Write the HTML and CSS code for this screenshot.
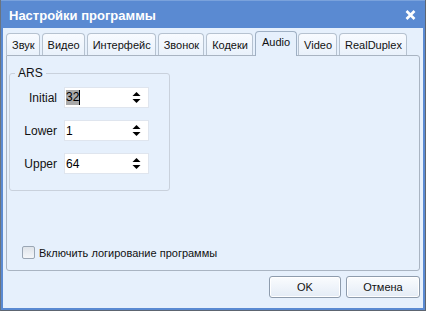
FILE: index.html
```html
<!DOCTYPE html>
<html lang="ru">
<head>
    <meta charset="UTF-8">
    <title>Настройки программы</title>
    <link rel="stylesheet" href="styles.css">
</head>
<body>
    <div class="window">
        <div class="titlebar">
            <span class="title">Настройки программы</span>
            <svg class="close" width="11" height="10" viewBox="0 0 11 10">
                <path d="M1.5 1 L9.5 9 M9.5 1 L1.5 9" stroke="#fff" stroke-width="2.6"/>
            </svg>
        </div>

        <div class="content">
            <div class="tabs">
                <div class="tab">Звук</div>
                <div class="tab">Видео</div>
                <div class="tab">Интерфейс</div>
                <div class="tab">Звонок</div>
                <div class="tab">Кодеки</div>
                <div class="tab active">Audio</div>
                <div class="tab">Video</div>
                <div class="tab">RealDuplex</div>
            </div>

            <div class="panel">
                <fieldset class="group">
                    <legend>ARS</legend>
                    <div class="row">
                        <label>Initial</label>
                        <div class="spin"><span class="value"><span class="sel">32</span><span class="caret"></span></span>
                            <svg width="9" height="13" viewBox="0 0 9 13"><path d="M0.5 5 L4.5 1 L8.5 5 Z M0.5 8 L8.5 8 L4.5 12 Z" fill="#000"/></svg>
                        </div>
                    </div>
                    <div class="row">
                        <label>Lower</label>
                        <div class="spin"><span class="value">1</span>
                            <svg width="9" height="13" viewBox="0 0 9 13"><path d="M0.5 5 L4.5 1 L8.5 5 Z M0.5 8 L8.5 8 L4.5 12 Z" fill="#000"/></svg>
                        </div>
                    </div>
                    <div class="row">
                        <label>Upper</label>
                        <div class="spin"><span class="value">64</span>
                            <svg width="9" height="13" viewBox="0 0 9 13"><path d="M0.5 5 L4.5 1 L8.5 5 Z M0.5 8 L8.5 8 L4.5 12 Z" fill="#000"/></svg>
                        </div>
                    </div>
                </fieldset>

                <div class="check">
                    <span class="box"></span>
                    <span>Включить логирование программы</span>
                </div>
            </div>

            <div class="buttons">
                <button class="btn ok">OK</button>
                <button class="btn">Отмена</button>
            </div>
        </div>
    </div>
</body>
</html>
```

FILE: styles.css
```css
* {
    margin: 0;
    padding: 0;
    box-sizing: border-box;
}
body {
    font-family: 'Liberation Sans', Arial, sans-serif;
    font-size: 11px;
    color: #000;
    background: #fff;
}
.window {
    width: 426px;
    height: 311px;
    display: flex;
    flex-direction: column;
    background: #5a8ad2;
    border: 1px solid #5d6570;
    border-top: none;
    border-left-color: #6a7480;
    padding: 0 2px 2px 1px;
}
.titlebar {
    height: 28px;
    margin: 0 -2px 0 -1px;
    padding: 0 9px 0 8px;
    display: flex;
    align-items: center;
    justify-content: space-between;
    background: #5a8ad2;
    border-top: 1px solid #7aa2dc;
}
.title {
    color: #fff;
    font-weight: bold;
    font-size: 13px;
    padding-top: 1px;
}
.close {
    display: block;
    margin-top: 1px;
}
.content {
    flex: 1;
    background: #e6f0fc;
    display: flex;
    flex-direction: column;
    padding: 3px 3px 9px 2px;
    border-left: 1px solid #5a8ad2;
}
.tabs {
    display: flex;
    align-items: flex-end;
    height: 24px;
    padding-left: 1px;
    position: relative;
    z-index: 1;
}
.tab {
    height: 22px;
    padding: 5px 4px 0 5px;
    margin-right: 2px;
    border: 1px solid #b6c2d0;
    border-bottom: none;
    border-radius: 4px 4px 0 0;
    background: linear-gradient(#f8fbff, #e9f1fb);
    white-space: nowrap;
    color: #111;
}
.tab.active {
    height: 25px;
    margin: 0 1px -1px 0;
    padding: 4px 6px 0;
    background: #e6f0fc;
    border-color: #9fb0c4;
}
.panel {
    flex: 1;
    border: 1px solid #a9b4c2;
    border-radius: 0 3px 3px 3px;
    padding: 11px 2px 0;
    margin-left: 1px;
    display: flex;
    flex-direction: column;
}
.group {
    width: 161px;
    height: 124px;
    border: 1px solid #c9d1dc;
    border-radius: 3px;
    padding: 8px 0 0;
}
.group legend {
    margin-left: 5px;
    padding: 0 3px;
    font-size: 12px;
    line-height: 12px;
    color: #111;
}
.row {
    display: flex;
    align-items: center;
    margin-bottom: 12px;
}
.row label {
    width: 54px;
    text-align: right;
    padding-right: 7px;
    font-size: 12px;
    color: #111;
}
.spin {
    width: 85px;
    height: 21px;
    background: #fff;
    border: 1px solid #dfe5ee;
    display: flex;
    align-items: center;
    justify-content: space-between;
    padding: 0 7px 0 1px;
    font-size: 12px;
}
.value {
    display: flex;
    align-items: center;
}
.sel {
    background: #a9a9a9;
    line-height: 15px;
}
.caret {
    width: 1px;
    height: 15px;
    background: #000;
}
.check {
    margin-top: auto;
    margin-bottom: 11px;
    padding-left: 13px;
    display: flex;
    align-items: center;
    gap: 4px;
    font-size: 11px;
    color: #111;
}
.box {
    width: 13px;
    height: 13px;
    border: 1px solid #9aa6b4;
    border-radius: 2px;
    background: linear-gradient(#dfe4ea, #f4f6f9);
}
.buttons {
    display: flex;
    justify-content: flex-end;
    gap: 5px;
    padding-top: 5px;
    margin-bottom: 1px;
}
.btn {
    height: 22px;
    width: 74px;
    font-family: 'Liberation Sans', Arial, sans-serif;
    font-size: 11px;
    border: 1px solid #8e9cad;
    border-radius: 3px;
    background: linear-gradient(#fafcfe, #e4ecf6);
    box-shadow: inset 0 0 0 1px #ffffff;
    color: #111;
}
.btn.ok {
    width: 72px;
}
```
